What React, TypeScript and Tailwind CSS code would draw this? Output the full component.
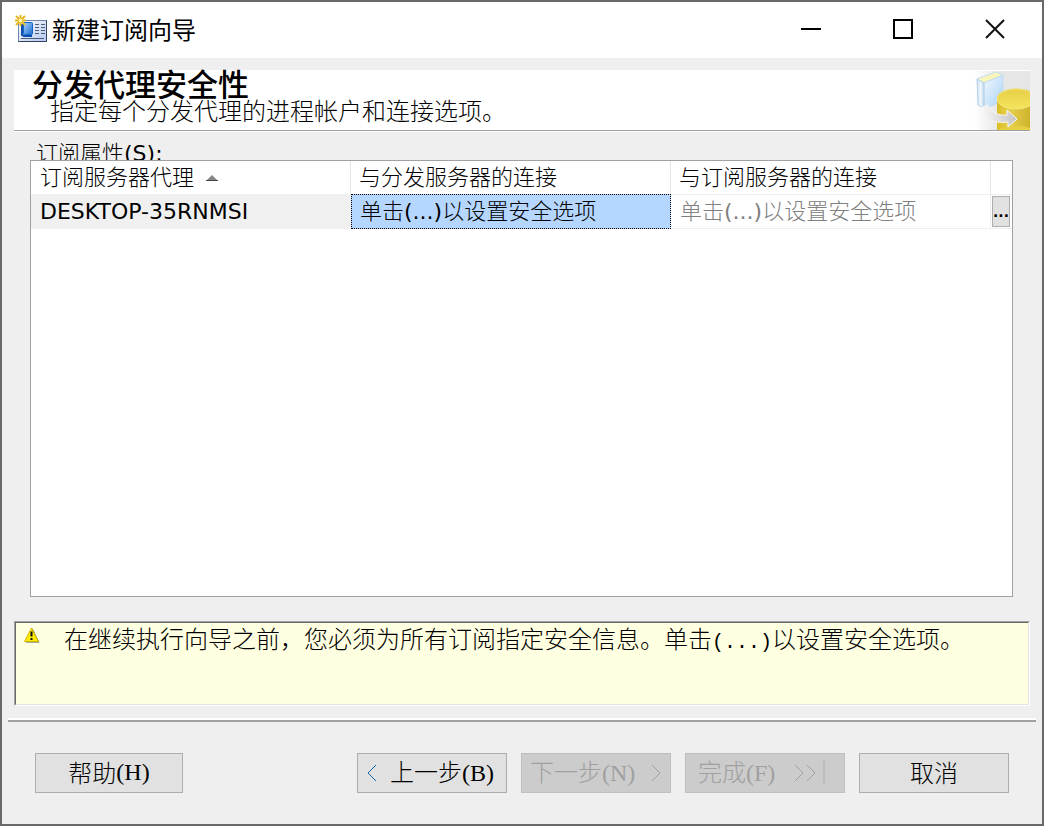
import React from "react";

const UI_FONT = "font-['DejaVu_Sans','Noto_Sans_CJK_SC',sans-serif]";
const CJK_FONT = "font-['Noto_Sans_CJK_SC',sans-serif]";

// Access key shown after a button label, e.g. (H)
const AccessKey: React.FC<{ children: React.ReactNode }> = ({ children }) => (
  <span className="font-['Liberation_Serif',serif] font-normal">{children}</span>
);

// Latin punctuation inside UI_FONT text needs the regular weight
const Dots: React.FC = () => <span className="font-normal">(...)</span>;

const AppIcon: React.FC = () => (
  <svg className="h-8 w-8 shrink-0" viewBox="0 0 32 32" aria-hidden="true">
    <defs>
      <linearGradient id="card" x1="0" y1="0" x2="1" y2="1">
        <stop offset="0" stopColor="#ffffff" />
        <stop offset="1" stopColor="#b3c8ee" />
      </linearGradient>
      <linearGradient id="book" x1="0" y1="0" x2="1" y2="1">
        <stop offset="0" stopColor="#a9d6fa" />
        <stop offset="1" stopColor="#1a6ad0" />
      </linearGradient>
    </defs>
    <rect x="3.5" y="6.5" width="28" height="21" fill="url(#card)" stroke="#6f86ad" />
    <path d="M3.5 27.5h28v-21" fill="none" stroke="#33435f" />
    <path d="M7 10v11l2 1h8" fill="none" stroke="#0a4fae" strokeWidth="2" />
    <rect x="8.5" y="8.5" width="9" height="12" rx="1" fill="url(#book)" stroke="#1764c4" />
    <path d="M20 10.5h4M26 10.5h4M20 13.5h4M26 13.5h4M20 16.5h4M26 16.5h4M20 19.5h4M26 19.5h4M6 24.5h23" stroke="#4c5d7c" />
    <path d="M5.5 1v11M0 6.5h11M1 2l9 9M10 2l-9 9" stroke="#e9b51c" strokeWidth="2" />
    <circle cx="5.5" cy="6.5" r="2" fill="#fff7ac" />
  </svg>
);

const HeaderArt: React.FC = () => (
  <svg className="h-[59px] w-[56px] shrink-0" viewBox="0 0 56 59" aria-hidden="true">
    <defs>
      <linearGradient id="fade">
        <stop offset="0" stopColor="#ffffff" />
        <stop offset="0.45" stopColor="#e6e6e6" />
      </linearGradient>
      <linearGradient id="cover" x1="0" y1="0" x2="1" y2="1">
        <stop offset="0" stopColor="#f2f8fe" />
        <stop offset="1" stopColor="#a8d2f6" />
      </linearGradient>
      <linearGradient id="spine">
        <stop offset="0" stopColor="#c3dcf1" />
        <stop offset="0.5" stopColor="#f2f7fc" />
        <stop offset="1" stopColor="#bdd7ee" />
      </linearGradient>
      <linearGradient id="drum">
        <stop offset="0" stopColor="#d9bd23" />
        <stop offset="0.3" stopColor="#e8d04e" />
        <stop offset="1" stopColor="#c6a91f" />
      </linearGradient>
      <linearGradient id="lid" x1="0" y1="0" x2="0" y2="1">
        <stop offset="0" stopColor="#e6ce45" />
        <stop offset="1" stopColor="#f5e55c" />
      </linearGradient>
      <linearGradient id="arrow">
        <stop offset="0" stopColor="#fafafa" />
        <stop offset="1" stopColor="#c3c3c3" />
      </linearGradient>
    </defs>
    <rect width="56" height="59" fill="url(#fade)" />
    <path d="M3 8L22 1L29 4L10 12Z" fill="#f8f6b9" stroke="#c6dced" />
    <path d="M10 12L29 4V30L10 38Z" fill="url(#cover)" stroke="#c3dbef" />
    <path d="M3 8L10 12V38L4 34Z" fill="url(#spine)" stroke="#b8d2e8" />
    <path d="M23 28C23 14 61 14 63 28V59H23Z" fill="url(#drum)" />
    <ellipse cx="42" cy="28" rx="19" ry="10" fill="url(#lid)" stroke="#f3e67d" />
    <path d="M24 59C32 54 48 54 56 57V59Z" fill="#e6cf42" />
    <path
      d="M6 37L14 34C17 41 24 45 33 44V39L43 48L34 56V51C19 53 9 47 6 37Z"
      fill="url(#arrow)"
      stroke="#f6f6f6"
    />
  </svg>
);

const TitleBar: React.FC = () => (
  <header className="flex h-14 shrink-0 items-center bg-white pl-[13px]">
    <AppIcon />
    <h1 className={`ml-1 flex-1 pb-0.5 pl-px text-[24px] leading-8 ${CJK_FONT}`}>新建订阅向导</h1>
    <div className="flex h-full pb-0.5 pr-px">
      <button type="button" aria-label="最小化" className="flex w-[92px] items-center justify-center">
        <svg className="h-5 w-5" viewBox="0 0 20 20"><path d="M0 10h20" stroke="#000" strokeWidth="2" /></svg>
      </button>
      <button type="button" aria-label="最大化" className="flex w-[92px] items-center justify-center">
        <svg className="h-5 w-5" viewBox="0 0 20 20"><path d="M1 1h18v18H1z" fill="none" stroke="#000" strokeWidth="2" /></svg>
      </button>
      <button type="button" aria-label="关闭" className="flex w-[92px] items-center justify-center">
        <svg className="h-5 w-5" viewBox="0 0 20 20"><path d="M1 1l18 18M19 1L1 19" stroke="#111" strokeWidth="2" /></svg>
      </button>
    </div>
  </header>
);

const PageHeader: React.FC = () => (
  <section className="mx-3 flex h-[62px] shrink-0 items-end justify-between border-b border-white bg-[#a0a0a0] pb-px">
    <div className="h-full flex-1 bg-white pl-[18px]">
      <h2 className={`text-[31px] font-medium leading-[26px] ${CJK_FONT}`}>分发代理安全性</h2>
      <p className={`pl-[18px] text-[24px] font-light leading-7 ${CJK_FONT}`}>指定每个分发代理的进程帐户和连接选项。</p>
    </div>
    <div className="flex h-full items-end bg-white"><HeaderArt /></div>
  </section>
);

const HEAD_CELL = "border-r border-[#e5e5e5] pl-2 text-left font-light whitespace-nowrap";

const SubscriptionTable: React.FC = () => (
  <div className="mx-7 mr-[29px] min-h-[437px] flex-1 border border-[#a0a0a5] bg-white">
    <table
      aria-labelledby="subscription-label"
      className={`w-full table-fixed border-separate border-spacing-0 text-[22px] font-light leading-8 ${UI_FONT}`}
    >
      <colgroup>
        <col />
        <col />
        <col />
        <col className="w-[21px]" />
      </colgroup>
      <thead>
        <tr className="h-[33px]">
          <th scope="col" className={HEAD_CELL}>
            <span className="flex items-center gap-3 pl-px">
              订阅服务器代理
              <svg className="h-1.5 w-3" viewBox="0 0 12 6" aria-hidden="true">
                <path d="M0 6L6 0L12 6Z" fill="#858585" />
                <path d="M0 5.5h12" stroke="#454545" />
              </svg>
            </span>
          </th>
          <th scope="col" className={HEAD_CELL}>与分发服务器的连接</th>
          <th scope="col" className={HEAD_CELL}>与订阅服务器的连接</th>
          <th scope="col" aria-label="操作" />
        </tr>
      </thead>
      <tbody>
        <tr className="h-[35px]">
          <td className="bg-[#f0f0f0] pl-[9px] font-normal">DESKTOP-35RNMSI</td>
          <td className="bg-[#b5d7ff] pl-[9px] outline-1 -outline-offset-1 outline-dotted outline-black">
            单击<Dots />以设置安全选项
          </td>
          <td className="border-y border-r border-[#eeeeee] pl-[9px] text-[#808080]">
            单击<Dots />以设置安全选项
          </td>
          <td className="border-y border-[#eeeeee] pl-px">
            <button
              type="button"
              aria-label="设置安全选项"
              className="flex h-[31px] w-[18px] items-center justify-center border border-[#adadad] bg-[#e1e1e1] text-[14px] font-bold leading-7"
            >
              ...
            </button>
          </td>
        </tr>
      </tbody>
    </table>
  </div>
);

const Warning: React.FC = () => (
  <section
    role="status"
    className="mx-3 mt-6 h-[85px] shrink-0 border border-b-white border-l-[#a0a0a0] border-r-white border-t-[#a0a0a0]"
  >
    <div className="flex h-full border border-b-[#e3e3e3] border-l-[#696969] border-r-[#e3e3e3] border-t-[#696969] bg-[#ffffe1] pl-2">
      <svg className="mt-1 h-4 w-4 shrink-0" viewBox="0 0 16 16" aria-hidden="true">
        <path d="M8.5 1.5L15.5 15.5H2Z" fill="#55555e" />
        <path d="M7.5 1L14.5 14.5H.5Z" fill="#ffed00" stroke="#d0b000" />
        <path d="M7.5 4.5v5M7.5 11v2" stroke="#111" strokeWidth="2" />
      </svg>
      <p className={`pl-6 text-[24px] font-light leading-[30px] ${CJK_FONT}`}>
        在继续执行向导之前，您必须为所有订阅指定安全信息。单击
        <span className="font-['Liberation_Mono',monospace] text-[20px] font-normal">(...)</span>
        以设置安全选项。
      </p>
    </div>
  </section>
);

const BUTTON = `flex h-10 items-center border pb-0.5 text-[24px] font-light leading-8 whitespace-nowrap ${CJK_FONT}`;
const ENABLED = "border-[#adadad] bg-[#e1e1e1] text-black";
const DISABLED = "border-[#bfbfbf] bg-[#cccccc] text-[#a0a0a0]";

const Chevron: React.FC<{ back?: boolean }> = ({ back }) => (
  <svg className="mt-0.5 h-5 w-3 shrink-0" viewBox="0 0 12 20" fill="none" aria-hidden="true">
    <path d={back ? "M10 2L2 10L10 18" : "M2 2L10 10L2 18"} stroke={back ? "#1768a8" : "#a0a0a0"} />
  </svg>
);

const Footer: React.FC = () => (
  <footer className="mx-1.5 mt-3 shrink-0 border-t-2 border-white">
    <div className="flex items-center gap-3.5 border-t-2 border-[#a0a0a0] px-[27px] py-[31px]">
      <button type="button" className={`mr-auto w-[148px] justify-center ${BUTTON} ${ENABLED}`}>
        帮助<AccessKey>(H)</AccessKey>
      </button>
      <button type="button" className={`w-[150px] gap-3 pl-2 ${BUTTON} ${ENABLED}`}>
        <Chevron back />
        <span>上一步<AccessKey>(B)</AccessKey></span>
      </button>
      <button type="button" disabled className={`w-[150px] justify-between pl-2 pr-2 ${BUTTON} ${DISABLED}`}>
        <span>下一步<AccessKey>(N)</AccessKey></span>
        <Chevron />
      </button>
      <button type="button" disabled className={`w-[160px] pl-3 pr-[19px] ${BUTTON} ${DISABLED}`}>
        <span className="mr-auto">完成<AccessKey>(F)</AccessKey></span>
        <Chevron />
        <Chevron />
        <span className="ml-1.5 h-6 w-0.5 bg-[#b9bfc5]" />
      </button>
      <button type="button" className={`w-[150px] justify-center ${BUTTON} ${ENABLED}`}>取消</button>
    </div>
  </footer>
);

const App: React.FC = () => (
  <main className="flex min-h-screen flex-col border-2 border-[#69696b] bg-[#efefef] text-black">
    <TitleBar />
    <div className="h-3 shrink-0" />
    <PageHeader />
    <div
      id="subscription-label"
      className={`h-7 shrink-0 overflow-hidden pl-[34px] pt-1.5 text-[22px] font-light leading-8 ${UI_FONT}`}
    >
      订阅属性<span className="font-normal">(S):</span>
    </div>
    <SubscriptionTable />
    <Warning />
    <Footer />
  </main>
);

export default App;
